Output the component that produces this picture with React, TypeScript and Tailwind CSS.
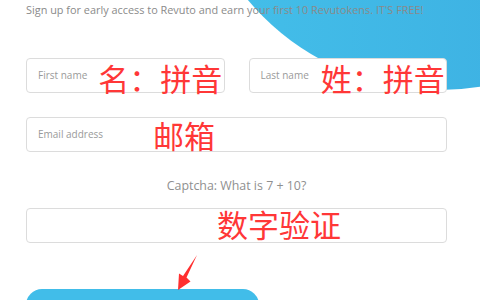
import React from 'react';

const cjk = { fontFamily: '"Noto Sans CJK SC", "Noto Sans", sans-serif' };

const Note = ({ children, className = '' }: { children: React.ReactNode; className?: string }) => (
  <span className={`text-[31px] leading-none text-[#ff3737] whitespace-nowrap ${className}`} style={cjk}>
    {children}
  </span>
);

const Field = ({ placeholder, note, noteGap, className = '' }: { placeholder?: string; note?: string; noteGap: string; className?: string }) => (
  <div className={`h-[35px] min-w-0 flex items-center bg-white border border-[#dcdcdc] rounded-[4px] pl-[11px] ${className}`}>
    {placeholder && <span className="text-[10px] text-[#9a9a9a] whitespace-nowrap">{placeholder}</span>}
    {note && <Note className={noteGap}>{note}</Note>}
  </div>
);

export default function App() {
  return (
    <div className="relative w-[480px] h-[300px] overflow-hidden bg-white" style={{ fontFamily: '"Open Sans", "Liberation Sans", sans-serif' }}>
      {/* blue blob behind the form */}
      <svg className="absolute top-0 left-0" width="480" height="300" viewBox="0 0 480 300">
        <defs>
          <linearGradient id="blob" x1="0" y1="0" x2="1" y2="0">
            <stop offset="0" stopColor="#44c0ea" />
            <stop offset="1" stopColor="#3aaadf" />
          </linearGradient>
        </defs>
        <circle cx="440" cy="-160" r="250" fill="url(#blob)" />
      </svg>

      <div className="relative pl-[26px] pr-[33px]">
        <p className="mt-[3px] text-[10.9px] leading-[14px] text-[#8a8a8a] whitespace-nowrap">
          Sign up for early access to Revuto and earn your first 10 Revutokens. IT'S FREE!
        </p>

        <div className="mt-[41px] grid grid-cols-2 gap-[24px]">
          <Field placeholder="First name" note="名：拼音" noteGap="ml-[11px] mt-[3px]" />
          <Field placeholder="Last name" note="姓：拼音" noteGap="ml-[12px] mt-[3px]" />
        </div>

        <Field className="mt-[24px]" placeholder="Email address" note="邮箱" noteGap="ml-[50px]" />

        <p className="mt-[26px] text-center text-[12.4px] leading-[16px] text-[#8f8f8f]">Captcha: What is 7 + 10?</p>

        <Field className="mt-[14px]" note="数字验证" noteGap="ml-[179px] -mt-[5px]" />

        <div className="mt-[46px] flex items-start">
          <button className="w-[233px] h-[40px] rounded-[16px] bg-[#41bde9]" />
          <Note className="ml-[2px] mt-[10px]">点击注册</Note>
        </div>
      </div>

      {/* red annotation arrow */}
      <svg className="absolute top-0 left-0 pointer-events-none" width="480" height="300" viewBox="0 0 480 300">
        <polygon points="197,255 186.5,277.5 190.5,281.5 178,290 179,273.5 183,276" fill="#ff3030" />
      </svg>
    </div>
  );
}
